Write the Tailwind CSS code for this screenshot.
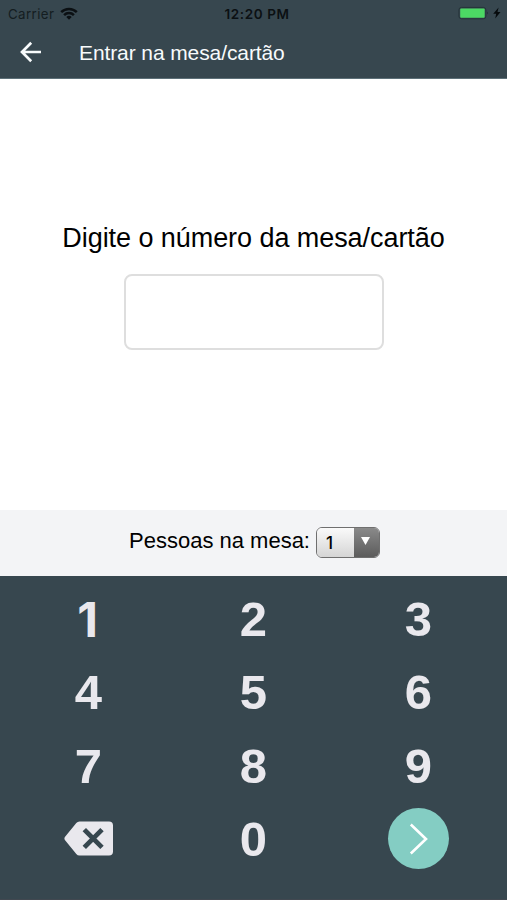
<!DOCTYPE html>
<html lang="pt-BR">
<head>
<meta charset="utf-8">
<meta name="viewport" content="width=device-width, initial-scale=1">
<title>Entrar na mesa/cartão</title>
<script src="https://cdn.jsdelivr.net/npm/@tailwindcss/browser@4"></script>
</head>
<body class="flex h-[900px] w-[507px] flex-col overflow-hidden bg-white font-['Liberation_Sans',Arial,sans-serif] text-black">
  <header class="h-[79px] shrink-0 border-b border-[#5d7078] bg-[#37474f]">
    <div class="grid h-[28px] grid-cols-3 items-center pr-[5px] pl-2 font-['Inter','Liberation_Sans',sans-serif] text-[#0b1013]">
      <div class="flex items-center gap-[6px]">
        <span class="pt-px text-[13.3px] tracking-[0.4px] text-[#141d21]">Carrier</span>
        <svg class="mb-px h-[13px] w-[18px]" viewBox="0 0 18 13" fill="none" stroke="currentColor" stroke-width="2.5">
          <path d="M1.2 5.2a11 11 0 0 1 15.6 0"/>
          <path d="M4.1 8.1a6.9 6.9 0 0 1 9.8 0"/>
          <path d="M9 12.8 6.3 10.1a3.8 3.8 0 0 1 5.4 0z" fill="currentColor" stroke="none"/>
        </svg>
      </div>
      <div class="pl-1 text-center text-[13.5px] font-semibold tracking-[0.6px] whitespace-nowrap">12:20 PM</div>
      <div class="flex items-center justify-end">
        <svg class="mb-[2px] h-[14px] w-[44px]" viewBox="0 0 44 14">
          <rect x=".9" y="1.4" width="27" height="11.4" rx="2.6" fill="none" stroke="#26343a" stroke-width="1"/>
          <rect x="2.2" y="2.6" width="24.5" height="9.2" rx="1" fill="#4cd964"/>
          <path d="M29.3 5.4q1.7 1.6 0 3.2z" fill="#1b272c"/>
          <path d="M40.6 1.6 35.2 7.8h3l-1 4.8 5.3-6.5h-3z" fill="#070b0d"/>
        </svg>
      </div>
    </div>
    <div class="flex h-[48px] items-center pl-[20px] text-[#f8fbfc]">
      <svg class="h-[22px] w-[22px]" viewBox="0 0 22 22" fill="none" stroke="currentColor" stroke-width="2.7">
        <path d="M21 11H2.4M11.2 1.8 2 11l9.2 9.2"/>
      </svg>
      <h1 class="ml-[37px] pt-[2px] text-[21px] leading-[24px] tracking-[-0.1px] whitespace-nowrap">Entrar na mesa/cartão</h1>
    </div>
  </header>

  <main class="flex h-[431px] shrink-0 flex-col items-center pt-[143px]">
    <label for="mesa" class="text-[27px] leading-[32px] tracking-[-0.06px] whitespace-nowrap">Digite o número da mesa/cartão</label>
    <input id="mesa" type="text" class="mt-[20px] h-[76px] w-[260px] rounded-lg border-2 border-[#dedede] bg-white px-4 text-center text-3xl outline-none">
  </main>

  <section class="flex h-[66px] shrink-0 items-center justify-center gap-[6px] bg-[#f3f4f6] pb-[2px] pl-[2px]">
    <span class="pb-[3px] text-[22px] leading-[26px] whitespace-nowrap">Pessoas na mesa:</span>
    <button type="button" class="flex h-[31px] w-[64px] overflow-hidden rounded-[6px] border border-[#6f6f6f] font-['Inter','Liberation_Sans',sans-serif] text-[17px] font-medium">
      <span class="flex w-[37px] items-center bg-linear-to-b from-[#fafafa] to-[#d5d5d5] pt-[2px] pl-[9px] leading-none">1</span>
      <span class="flex flex-1 items-center justify-center bg-linear-to-b from-[#8a8a8a] to-[#5c5c5c]">
        <svg class="mr-px mb-[2px] h-2 w-[9px]" viewBox="0 0 9 8"><path d="M0 0h9L4.5 8z" fill="#fff"/></svg>
      </span>
    </button>
  </section>

  <section class="flex-1 border-b border-[#414850] bg-[#37474f] px-[6px] pt-[7px]">
    <div class="grid grid-cols-3 auto-rows-[73.3px] place-items-center text-[49px] leading-none font-bold text-[#e9e8ed]">
      <button type="button" class="pr-[2px] font-['Inter','Liberation_Sans',sans-serif] text-[48px]">1</button><button type="button">2</button><button type="button">3</button>
      <button type="button">4</button><button type="button">5</button><button type="button">6</button>
      <button type="button">7</button><button type="button">8</button><button type="button">9</button>
      <button type="button" aria-label="Apagar">
        <svg class="mb-[3px] block h-[35px] w-[50px]" viewBox="0 0 50 35">
          <path d="M15.5.4H45a4 4 0 0 1 4 4v26.2a4 4 0 0 1-4 4H15.5q-2 0-3.2-1.6L.9 19q-1-1.5 0-3L12.3 2Q13.5.4 15.5.4z" fill="currentColor"/>
          <path d="M20.3 8.6 38 26.4M38 8.6 20.3 26.4" stroke="#37474f" stroke-width="4.8" fill="none"/>
        </svg>
      </button>
      <button type="button">0</button>
      <button type="button" aria-label="Avançar" class="mb-[2px] flex h-[61px] w-[61px] items-center justify-center rounded-full bg-[#84cdc3]">
        <svg class="h-[32px] w-[20px]" viewBox="0 0 20 32" fill="none" stroke="#fff" stroke-width="2.6"><path d="M1.8 1.5 17 16 1.8 30.5"/></svg>
      </button>
    </div>
  </section>
</body>
</html>
